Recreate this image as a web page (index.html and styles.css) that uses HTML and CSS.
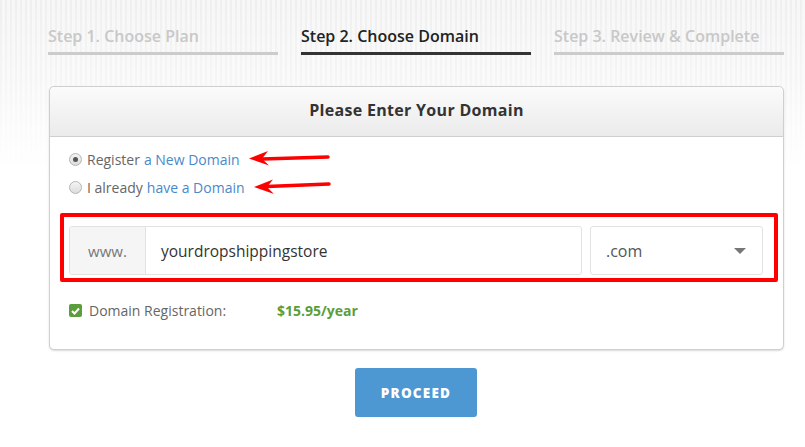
FILE: index.html
```html
<!DOCTYPE html>
<html>
	<head>
		<meta charset="UTF-8">
		<title>Choose Domain</title>
		<link rel="stylesheet" href="styles.css">
	</head>
	<body>
		<div class="wrap">
			<ul class="steps">
				<li>Step 1. Choose Plan</li>
				<li class="active">Step 2. Choose Domain</li>
				<li>Step 3. Review &amp; Complete</li>
			</ul>

			<div class="card">
				<div class="card-head">Please Enter Your Domain</div>
				<div class="card-body">
					<label class="opt">
						<span class="radio checked"></span>
						Register <a href="#">a New Domain</a>
						<svg class="arrow a1" width="84" height="16" viewBox="0 0 84 16"><path d="M80 7 L14 9" stroke="#f00" stroke-width="3.5" stroke-linecap="round"/><path d="M1 8.5 L20 1 L14 8.8 L21 15.5 Z" fill="#f00"/></svg>
					</label>
					<label class="opt">
						<span class="radio"></span>
						I already <a href="#">have a Domain</a>
						<svg class="arrow a2" width="80" height="16" viewBox="0 0 80 16"><path d="M76 6 L14 8.5" stroke="#f00" stroke-width="3.5" stroke-linecap="round"/><path d="M1 9 L20 1.5 L14 9 L21 16 Z" fill="#f00"/></svg>
					</label>

					<div class="domain-row">
						<div class="mark"></div>
						<div class="group">
							<span class="addon">www.</span>
							<span class="input">yourdropshippingstore</span>
						</div>
						<div class="select">
							<span>.com</span>
							<span class="caret"></span>
						</div>
					</div>

					<div class="reg">
						<span class="check"><svg width="9" height="8" viewBox="0 0 9 8"><path d="M1 4 L3.5 6.5 L8 1.5" stroke="#fff" stroke-width="2" fill="none"/></svg></span>
						<span class="reg-label">Domain Registration:</span>
						<span class="price">$15.95/year</span>
					</div>
				</div>
			</div>

			<div class="actions">
				<button class="btn">PROCEED</button>
			</div>
		</div>
	</body>
</html>
```

FILE: styles.css
```css
html,body{
	margin: 0;
	padding: 0;
}
body{
	font-family: "Open Sans", sans-serif;
	color: #666;
	height: 447px;
	background:
		linear-gradient(to bottom, rgba(255,255,255,0) 0, rgba(255,255,255,0.4) 80px, #fff 170px),
		repeating-linear-gradient(90deg, #efefef 0, #efefef 2px, #f7f7f7 2px, #f7f7f7 5px);
	background-color: #fff;
	overflow: hidden;
}
.wrap{
	width: 736px;
	margin-left: 48px;
	padding-top: 25px;
}

/* steps */
.steps{
	display: grid;
	grid-template-columns: repeat(3, 1fr);
	gap: 23px;
	margin: 0;
	padding: 0;
	list-style: none;
}
.steps li{
	font-size: 16px;
	font-weight: 600;
	color: #c8c8c8;
	height: 27px;
	border-bottom: 3px solid #ccc;
	white-space: nowrap;
}
.steps li.active{
	color: #222;
	border-bottom-color: #333;
}

/* card */
.card{
	margin-top: 31px;
	margin-left: 1px;
	background: #fff;
	border: 1px solid #cfcfcf;
	border-radius: 5px;
	box-shadow: 0 1px 2px rgba(0,0,0,0.15);
}
.card-head{
	height: 49px;
	line-height: 47px;
	text-align: center;
	font-size: 16px;
	font-weight: 700;
	letter-spacing: 0.3px;
	color: #333;
	border-radius: 5px 5px 0 0;
	border-bottom: 1px solid #cfcfcf;
	background: linear-gradient(to bottom, #fbfbfb, #ebebeb);
}
.card-body{
	padding: 8px 20px 29px 19px;
}

.opt{
	display: flex;
	align-items: center;
	height: 28px;
	font-size: 14px;
	color: #666;
	position: relative;
}
.opt a{
	color: #4a89c8;
	text-decoration: none;
	margin-left: 4px;
}
.radio{
	width: 11px;
	height: 11px;
	border: 1px solid #b5b5b5;
	border-radius: 50%;
	background: linear-gradient(#f4f4f4, #dcdcdc);
	margin-right: 5px;
	position: relative;
}
.radio.checked::after{
	content: "";
	position: absolute;
	left: 3px;
	top: 3px;
	width: 5px;
	height: 5px;
	border-radius: 50%;
	background: #555;
}
.arrow{
	margin-left: 8px;
	position: relative;
	top: -1px;
}

/* domain row */
.domain-row{
	display: flex;
	gap: 8px;
	margin-top: 25px;
	height: 49px;
	position: relative;
}
.mark{
	position: absolute;
	left: -9px;
	right: -15px;
	top: -13px;
	bottom: -7px;
	border: 4px solid #f00;
	border-radius: 2px;
}
.group{
	flex: 1;
	display: flex;
	border: 1px solid #e2e2e2;
	border-radius: 3px;
}
.addon{
	width: 75px;
	background: #f5f5f5;
	border-right: 1px solid #e2e2e2;
	color: #777;
	font-size: 15px;
	display: flex;
	align-items: center;
	justify-content: center;
	border-radius: 3px 0 0 3px;
}
.input{
	flex: 1;
	display: flex;
	align-items: center;
	padding-left: 15px;
	font-size: 15.5px;
	color: #333;
}
.select{
	width: 173px;
	border: 1px solid #e2e2e2;
	border-radius: 3px;
	display: flex;
	align-items: center;
	justify-content: space-between;
	padding: 0 16px 0 15px;
	box-sizing: border-box;
	font-size: 16px;
	color: #555;
}
.caret{
	width: 0;
	height: 0;
	border-left: 6px solid transparent;
	border-right: 6px solid transparent;
	border-top: 6px solid #777;
}

/* registration */
.reg{
	display: flex;
	align-items: center;
	margin-top: 26px;
	font-size: 14px;
}
.check{
	width: 13px;
	height: 13px;
	background: #5a9e3c;
	border-radius: 2px;
	display: flex;
	align-items: center;
	justify-content: center;
	margin-right: 7px;
}
.reg-label{
	color: #666;
	width: 188px;
}
.price{
	color: #5a9e3c;
	font-weight: 700;
	font-size: 14px;
}

/* button */
.actions{
	display: flex;
	justify-content: center;
	margin-top: 18px;
}
.btn{
	width: 122px;
	height: 49px;
	background: #4d98d2;
	border: 0;
	border-radius: 3px;
	color: #fff;
	font-family: "Open Sans", sans-serif;
	font-weight: 800;
	font-size: 13.5px;
	letter-spacing: 1.2px;
}
```
